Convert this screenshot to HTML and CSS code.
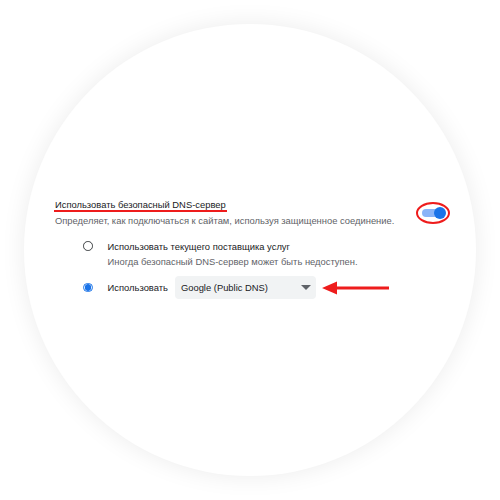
FILE: index.html
```html
<!DOCTYPE html>
<html lang="ru">
<head>
<meta charset="utf-8">
<link rel="stylesheet" href="styles.css">
</head>
<body>
<div class="page">
  <div class="circle">
    <div class="setting">
      <div class="setting-text">
        <div class="title"><span class="marked">Использовать безопасный DNS-сервер</span></div>
        <div class="desc">Определяет, как подключаться к сайтам, используя защищенное соединение.</div>
      </div>
      <div class="toggle-wrap">
        <div class="toggle"><span class="track"></span><span class="knob"></span></div>
        <span class="ring"></span>
      </div>
    </div>
    <div class="options">
      <div class="option">
        <span class="radio"></span>
        <div class="option-text">
          <div class="label">Использовать текущего поставщика услуг</div>
          <div class="sub">Иногда безопасный DNS-сервер может быть недоступен.</div>
        </div>
      </div>
      <div class="option option-select">
        <span class="radio checked"></span>
        <div class="label">Использовать</div>
        <div class="select">
          <span>Google (Public DNS)</span>
          <svg class="caret" width="10" height="5" viewBox="0 0 10 5"><path d="M0 0h10L5 5z" fill="#5f6368"/></svg>
        </div>
        <svg class="arrow" width="68" height="14" viewBox="0 0 68 14"><path d="M0 7L15 0.5V5.6H67V8.4H15V13.5Z" fill="#ee1c1c"/></svg>
      </div>
    </div>
  </div>
</div>
</body>
</html>
```
FILE: styles.css
```css
html, body {
  margin: 0;
  padding: 0;
  background: #fff;
}
body {
  font-family: "Liberation Sans", Arial, sans-serif;
  color: #202124;
}
.page {
  width: 500px;
  height: 500px;
  display: flex;
  align-items: center;
  justify-content: center;
}
.circle {
  width: 452px;
  height: 452px;
  border-radius: 50%;
  background: #fff;
  box-shadow: 0 0 24px rgba(0, 0, 0, 0.08);
  box-sizing: border-box;
  padding: 174px 26px 0 31px;
}
.setting {
  display: flex;
  align-items: center;
  justify-content: space-between;
}
.title {
  font-size: 9.4px;
  line-height: 13px;
}
.marked {
  display: inline-block;
  padding: 0 1px;
  margin-left: -1px;
  line-height: 11px;
  border-bottom: 2px solid #ee1c1c;
}
.desc {
  margin-top: 3px;
  font-size: 9.4px;
  line-height: 12px;
  color: #5f6368;
  white-space: nowrap;
}
.toggle-wrap {
  position: relative;
  width: 34px;
  height: 22px;
  margin-top: 1px;
  display: flex;
  align-items: center;
  justify-content: center;
}
.toggle {
  position: relative;
  width: 24px;
  height: 12px;
}
.track {
  position: absolute;
  left: 1px;
  top: 2px;
  width: 22px;
  height: 8px;
  border-radius: 4px;
  background: #8ab4f8;
}
.knob {
  position: absolute;
  right: -1px;
  top: 0;
  width: 12px;
  height: 12px;
  border-radius: 50%;
  background: #1a73e8;
}
.ring {
  position: absolute;
  left: 0;
  top: 0;
  width: 30px;
  height: 18px;
  border: 2px solid #ee1c1c;
  border-radius: 50%;
}
.options {
  margin-top: 14px;
  padding-left: 28px;
  display: flex;
  flex-direction: column;
  gap: 8px;
}
.option {
  display: flex;
  align-items: flex-start;
}
.radio {
  flex: none;
  width: 7.6px;
  height: 7.6px;
  border: 1.8px solid #3c4043;
  border-radius: 50%;
  margin-top: 0;
  margin-right: 15px;
  box-sizing: content-box;
}
.radio.checked {
  border-color: #1a73e8;
  background: radial-gradient(circle, #1a73e8 0 3px, #fff 3.6px);
}
.label {
  font-size: 9.4px;
  line-height: 12px;
  color: #202124;
}
.sub {
  margin-top: 3px;
  font-size: 9.4px;
  line-height: 12px;
  color: #5f6368;
}
.option-select {
  align-items: center;
}
.option-select .radio {
  margin-top: 0;
}
.select {
  margin-left: 7px;
  width: 141px;
  height: 23px;
  box-sizing: border-box;
  padding: 0 5px 0 6px;
  background: #f1f3f4;
  border-radius: 4px;
  display: flex;
  align-items: center;
  justify-content: space-between;
  font-size: 9.4px;
  color: #202124;
}
.arrow {
  margin-left: 6px;
}
```
